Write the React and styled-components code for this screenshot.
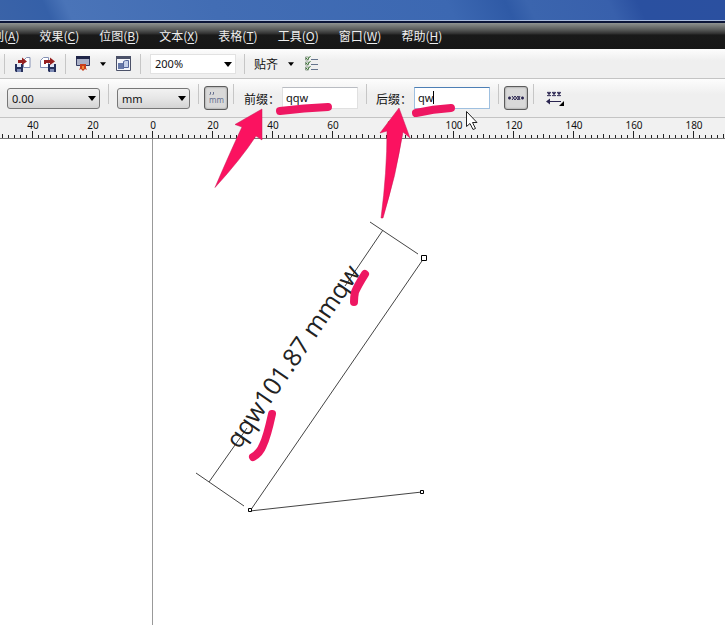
import React from 'react';
import styled, { createGlobalStyle } from 'styled-components';

const GlobalStyle = createGlobalStyle`
  * {
    box-sizing: border-box;
  }

  body {
    margin: 0;
    background: #fff;
    color: #111;
    font-family: "Noto Sans", "Noto Sans CJK SC", sans-serif;
    font-size: 11px;
  }
`;

const Window = styled.div`
  display: flex;
  flex-direction: column;
  height: 100vh;
  overflow: hidden;
`;

const TitleBar = styled.header`
  flex: none;
  height: 23px;
  border-bottom: 2px solid #0c1638;
  box-shadow: inset 0 -1px 0 #a9bbdc;
  background: linear-gradient(
    65deg,
    #3a63a8 0%,
    #3560a8 7%,
    #4a74b8 10%,
    #426db4 30%,
    #3c68b2 62%,
    #2f5aa6 70%,
    #3b65ae 73%,
    #3860ac 84%,
    #2a50a0 88%,
    #2b50a0 100%
  );
`;

const MenuBar = styled.nav`
  display: flex;
  flex: none;
  gap: 20px;
  height: 26px;
  overflow: hidden;
  background: linear-gradient(#8f9391 0%, #5a5c5b 25%, #2e2e2e 42%, #191919 46%, #171717 100%);
`;

const MenuLink = styled.a`
  flex: none;
  color: #eee;
  font-family: "Noto Sans CJK SC", sans-serif;
  font-size: 12px;
  line-height: 26px;
  text-decoration: none;
  white-space: nowrap;

  /* the first entry runs off the left edge of the window */
  &:first-child {
    margin-left: -20px;
  }

  > u {
    text-underline-offset: 2px;
  }
`;

const Bar = styled.div`
  display: flex;
  flex: none;
  align-items: center;
  border-bottom: 1px solid #c4c4c4;
  background: linear-gradient(#fdfdfd 0%, #efefef 40%, #efefef 100%);
`;

const StandardBar = styled(Bar)`
  height: 30px;
  padding-left: 4px;
`;

const PropertyBar = styled(Bar)`
  height: 39px;
  padding-left: 7px;
`;

const Divider = styled.span`
  flex: none;
  align-self: flex-start;
  width: 1px;
  height: 20px;
  margin: 5px ${({ $right }) => $right ?? 8}px 0 ${({ $left }) => $left ?? 8}px;
  background: #c6c6c6;
`;

const IconButton = styled.button`
  display: flex;
  flex: none;
  align-items: center;
  justify-content: center;
  width: ${({ $width }) => $width || 26}px;
  height: 24px;
  padding: 0;
  border: ${({ $pressed }) => ($pressed ? '1px solid #5c5c5c' : '0')};
  border-radius: 3px;
  background: ${({ $pressed }) => ($pressed ? '#d9d9d9' : 'transparent')};
  box-shadow: ${({ $pressed }) => ($pressed ? 'inset 0 0 2px #777' : 'none')};
`;

const SnapButton = styled.button`
  display: flex;
  flex: none;
  align-items: center;
  gap: 10px;
  padding: 0;
  border: 0;
  background: transparent;
  color: #111;
  font-family: "Noto Sans CJK SC", sans-serif;
  font-size: 12px;
`;

const SelectBox = styled.span`
  position: relative;
  display: flex;
  flex: none;
  width: ${({ $width }) => $width}px;
  height: ${({ $flat }) => ($flat ? 20 : 21)}px;

  > select {
    width: 100%;
    padding: 0 4px;
    border: 1px solid ${({ $flat }) => ($flat ? '#e2e2e2' : '#777')};
    border-radius: ${({ $flat }) => ($flat ? 0 : 3)}px;
    appearance: none;
    background: ${({ $flat }) => ($flat ? '#fff' : 'linear-gradient(#f2f2f2, #e6e6e6 50%, #d4d4d4)')};
    color: #111;
    font-family: "Noto Sans", sans-serif;
    font-size: 11px;
  }

  > svg {
    position: absolute;
    top: 8px;
    right: 4px;
    pointer-events: none;
  }
`;

const FieldLabel = styled.label`
  flex: none;
  margin-right: 2px;
  font-family: "Noto Sans CJK SC", sans-serif;
  font-size: 12px;
`;

const Field = styled.span`
  position: relative;
  display: flex;
  flex: none;
`;

const TextField = styled.input`
  width: 76px;
  height: 22px;
  padding: 0 3px 2px;
  border: 1px solid #e0e0e0;
  border-top-color: #b9bcc2;
  outline: 0;
  background: #fff;
  color: #111;
  font-family: "Noto Sans", sans-serif;
  font-size: 11px;

  &:focus {
    border-color: #9fc0e0;
    border-top-color: #4d7fb5;
    caret-color: transparent;
  }
`;

const TextCaret = styled.i`
  position: absolute;
  top: 4px;
  left: 19px;
  width: 1px;
  height: 13px;
  background: #000;
`;

const RulerStrip = styled.div`
  flex: none;
  height: 21px;
  overflow: hidden;
  border-bottom: 1px solid #777;
  background: #f1f1f1;

  > svg {
    display: block;
  }

  text {
    fill: #111;
    font-family: "Noto Sans", sans-serif;
    font-size: 10px;
    text-anchor: middle;
  }
`;

const Canvas = styled.main`
  flex: 1;
  min-height: 0;
  background: #fff;

  /* the marker strokes lie over the fields above */
  > svg {
    position: relative;
    z-index: 1;
    display: block;
    overflow: visible;
    pointer-events: none;
  }
`;

const DimensionText = styled.text`
  fill: #222;
  font-family: "Open Sans", sans-serif;
  font-size: 25px;
`;

const UnitText = styled.text`
  fill: #66708f;
  font-family: "Noto Sans", sans-serif;
  font-size: 8px;
`;

const menus = [
  { name: '排列', hotkey: 'A' },
  { name: '效果', hotkey: 'C' },
  { name: '位图', hotkey: 'B' },
  { name: '文本', hotkey: 'X' },
  { name: '表格', hotkey: 'T' },
  { name: '工具', hotkey: 'O' },
  { name: '窗口', hotkey: 'W' },
  { name: '帮助', hotkey: 'H' },
];

const Caret = ({ small }) => (
  <svg width={small ? 6 : 8} height={small ? 4 : 5} viewBox="0 0 8 5" aria-hidden="true">
    <path d="M0 0h8L4 5z" fill="#000" />
  </svg>
);

const Floppy = ({ x }) => (
  <g transform={`translate(${x} 8)`}>
    <path d="M0 0h8v8H1L0 7z" fill="#26305c" />
    <path d="M2 0h4v3H2z" fill="#dfe6f5" />
    <path d="M2 5h4v3H2z" fill="#7d8bb5" />
  </g>
);

const ImportIcon = () => (
  <svg width="17" height="16" viewBox="0 0 17 16" aria-hidden="true">
    <path d="M9.500 11.500V4.500l3-3h3.500v10z" fill="#fff" stroke="#8591b5" />
    <Floppy x={1} />
    <path d="M4 7V4h4V1.500l5 4L8 9V7z" fill="#96201f" />
  </svg>
);

const ExportIcon = () => (
  <svg width="17" height="16" viewBox="0 0 17 16" aria-hidden="true">
    <path d="M.5 11.500v-7l3-3h5v10z" fill="#fff" stroke="#8591b5" />
    <Floppy x={8} />
    <path d="M4 8V4h6V1.500l5 4-5 3.500V7H6v1z" fill="#96201f" />
  </svg>
);

const LauncherIcon = () => (
  <svg width="14" height="15" viewBox="0 0 14 15" aria-hidden="true">
    <path d="M.5.5h13v9H.5z" fill="#a9afc6" stroke="#343b60" />
    <path d="M0 0h14v3H0z" fill="#1f2548" />
    <path d="M4 8h6v4l1 2-2-1-2 2-2-2-2 1 1-2z" fill="#c93e1c" />
    <path d="M6 10h2v3H6z" fill="#f08a34" />
  </svg>
);

const WelcomeIcon = () => (
  <svg width="15" height="15" viewBox="0 0 15 15" aria-hidden="true">
    <path d="M.5.5h14v14H.5z" fill="#f4f6fb" stroke="#4b5168" />
    <path d="M0 0h15v3H0z" fill="#4b5168" />
    <path d="M2 7h6v6H2z" fill="#6678a8" />
    <path d="M7.500 5.500l2-1h3v7h-5z" fill="#c3cfe8" stroke="#52659a" />
  </svg>
);

const OptionsIcon = () => (
  <svg width="13" height="15" viewBox="0 0 13 15" fill="none" aria-hidden="true">
    {[1, 6, 11].map(y => (
      <g key={y}>
        <path d={`M.5 ${y}h3v3h-3z`} stroke="#8a9a8a" />
        <path d={`M1 ${y + 1}l1.500 1.500L5.500 ${y - 1}`} stroke="#3c7a35" />
        <path d={`M6 ${y + 2.5}h7`} stroke="#65748c" />
      </g>
    ))}
  </svg>
);

const UnitsIcon = () => (
  <svg width="16" height="18" viewBox="0 0 16 18" aria-hidden="true">
    <path d="M2.500 3v2l-1 1M5.500 3v2l-1 1" fill="none" stroke="#66708f" />
    <UnitText x="1" y="14">mm</UnitText>
  </svg>
);

const CenterTextIcon = () => (
  <svg width="18" height="8" viewBox="0 0 18 8" fill="none" stroke="#2a2550" aria-hidden="true">
    <path d="M5 2l3 4M8 2L5 6M8 2l3 4M11 2L8 6M11 2l2 4M13 2l-2 4" />
    <path d="M1 4h3M2.500 2.500v3M14 4h3M15.500 2.500v3" strokeWidth="1.500" />
  </svg>
);

const TextPositionIcon = () => (
  <svg width="18" height="15" viewBox="0 0 18 15" fill="none" stroke="#2a2550" aria-hidden="true">
    <path d="M1.500 1l3 4M4.500 1l-3 4M6.500 1l3 4M9.500 1l-3 4M11.500 1l3 4M14.500 1l-3 4" strokeWidth="1.500" />
    <path d="M1 10.500h14" />
    <path d="M4 7.500v6L0 10.500z" fill="#2a2550" stroke="none" />
    <path d="M18 10v5h-5z" fill="#000" stroke="none" />
  </svg>
);

const Dropdown = ({ label, value, width, flat }) => (
  <SelectBox $width={width} $flat={flat}>
    <select aria-label={label} defaultValue={value}>
      <option>{value}</option>
    </select>
    <Caret />
  </SelectBox>
);

const ORIGIN = 152;
const STEP = 6;

const Ruler = () => {
  const last = Math.floor((window.innerWidth - ORIGIN) / STEP);
  const ticks = [];
  for (let i = -25; i <= last; i++) {
    ticks.push(i);
  }

  return (
    <RulerStrip>
      <svg width="100%" height="20">
        {ticks.map(i => {
          const x = ORIGIN + Math.round(i * STEP * 1.002);
          const major = i % 10 === 0;
          return (
            <g key={i}>
              <path d={`M${x + 0.5} 20v${major ? -7 : i % 5 === 0 ? -4 : -3}`} stroke="#222" />
              {major && <text x={x + 1} y="11">{Math.abs(i * 2)}</text>}
            </g>
          );
        })}
      </svg>
    </RulerStrip>
  );
};

// drawing coordinates start at the window's top left, so marks can run over the bars
const Drawing = () => (
  <svg width="100%" height="100%" viewBox="0 139 725 486" preserveAspectRatio="xMinYMin slice">
    <g fill="none" stroke="#444">
      <path d="M152.500 139V2000" stroke="#999" />
      <path d="M370 222l48 32M196 473l48 33" />
      <path d="M383 230L345 286M247 428l-38 54" />
      <path d="M424 258L250 511l172-19" />
    </g>
    <DimensionText transform="translate(239 450) rotate(-55.4)">qqw101.87 mmqw</DimensionText>
    <g fill="#fff" stroke="#000">
      <path d="M421.500 255.500h5v5h-5zM248.500 508.500h3v3h-3zM420.500 490.500h3v3h-3z" />
    </g>
    <g fill="none" stroke="#ee1762" strokeWidth="8" strokeLinecap="round" strokeLinejoin="round">
      <path d="M280 111Q304 108 328 107M416 113Q433 109 451 108" />
      <path d="M365 274Q358 285 355 292Q354 297 354 302" />
      <path d="M272 414Q267 437 263 445Q260 453 253 457" />
    </g>
    <g fill="#fb1260" stroke="#c51a55" strokeWidth="0.500">
      <path d="M262 109L235 124.500L242 127Q232 148 215 187.500Q241 159 256 136L262 140z" />
      <path d="M399 108L380 133L387 131Q387 172 381 218h2Q396 176 403 132L410 138z" />
    </g>
    <path d="M466.500 111.500v15l3.500-3 3 6 2.500-1-3-6h4.500z" fill="#fff" stroke="#222" />
  </svg>
);

const App = () => (
  <Window>
    <GlobalStyle />
    <TitleBar />
    <MenuBar>
      {menus.map(item => (
        <MenuLink key={item.hotkey} href="#">
          {item.name}(<u>{item.hotkey}</u>)
        </MenuLink>
      ))}
    </MenuBar>

    <StandardBar>
      <Divider $left={0} $right={4} />
      <IconButton aria-label="导入"><ImportIcon /></IconButton>
      <IconButton aria-label="导出"><ExportIcon /></IconButton>
      <Divider $left={4} $right={4} />
      <IconButton aria-label="应用程序启动器"><LauncherIcon /></IconButton>
      <IconButton $width={14} aria-label="启动器选项"><Caret small /></IconButton>
      <IconButton aria-label="欢迎屏幕"><WelcomeIcon /></IconButton>
      <Divider $left={4} $right={9} />
      <Dropdown label="缩放级别" value="200%" width={86} flat />
      <Divider $right={9} />
      <SnapButton>贴齐 <Caret small /></SnapButton>
      <IconButton $width={34} aria-label="选项"><OptionsIcon /></IconButton>
    </StandardBar>

    <PropertyBar>
      <Dropdown label="精度" value="0.00" width={93} />
      <Divider />
      <Dropdown label="单位" value="mm" width={73} />
      <Divider $right={5} />
      <IconButton $width={24} $pressed aria-label="显示单位"><UnitsIcon /></IconButton>
      <Divider $left={5} $right={10} />
      <FieldLabel htmlFor="prefix">前缀：</FieldLabel>
      <Field>
        <TextField id="prefix" defaultValue="qqw" />
      </Field>
      <Divider $right={9} />
      <FieldLabel htmlFor="suffix">后缀：</FieldLabel>
      <Field>
        <TextField id="suffix" defaultValue="qw" autoFocus />
        <TextCaret />
      </Field>
      <Divider $right={5} />
      <IconButton $width={24} $pressed aria-label="文本居中"><CenterTextIcon /></IconButton>
      <Divider $left={5} />
      <IconButton aria-label="文本位置"><TextPositionIcon /></IconButton>
    </PropertyBar>

    <Ruler />
    <Canvas>
      <Drawing />
    </Canvas>
  </Window>
);

export default App;
